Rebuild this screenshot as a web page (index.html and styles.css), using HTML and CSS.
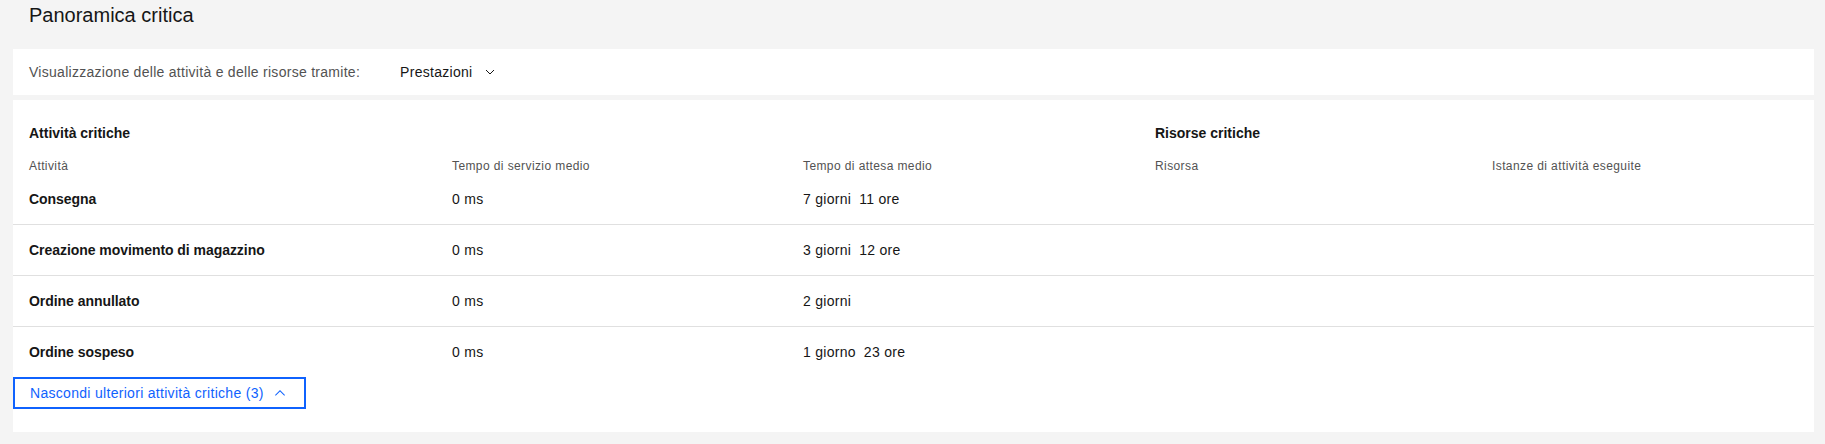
FILE: index.html
```html
<!DOCTYPE html>
<html lang="it">
<head>
<meta charset="utf-8">
<title>Panoramica critica</title>
<link rel="stylesheet" href="styles.css">
</head>
<body>
<div class="page">
  <h1 class="page-title">Panoramica critica</h1>

  <div class="card filter-card">
    <span class="filter-label">Visualizzazione delle attività e delle risorse tramite:</span>
    <button class="dropdown" type="button">
      <span>Prestazioni</span>
      <svg class="chev-down" width="16" height="16" viewBox="0 0 16 16" aria-hidden="true"><path d="M4 6l4 4 4-4" fill="none" stroke="#161616" stroke-width="1"/></svg>
    </button>
  </div>

  <div class="card table-card">
    <div class="grid sec-row">
      <div class="cell sec-title span3">Attività critiche</div>
      <div class="cell sec-title span2">Risorse critiche</div>
    </div>
    <div class="grid head-row">
      <div class="cell">Attività</div>
      <div class="cell">Tempo di servizio medio</div>
      <div class="cell">Tempo di attesa medio</div>
      <div class="cell">Risorsa</div>
      <div class="cell">Istanze di attività eseguite</div>
    </div>
    <div class="grid data-row">
      <div class="cell name">Consegna</div>
      <div class="cell">0 ms</div>
      <div class="cell"><span>7 giorni</span><span class="part">11 ore</span></div>
      <div class="cell"></div>
      <div class="cell"></div>
    </div>
    <div class="grid data-row">
      <div class="cell name">Creazione movimento di magazzino</div>
      <div class="cell">0 ms</div>
      <div class="cell"><span>3 giorni</span><span class="part">12 ore</span></div>
      <div class="cell"></div>
      <div class="cell"></div>
    </div>
    <div class="grid data-row">
      <div class="cell name">Ordine annullato</div>
      <div class="cell">0 ms</div>
      <div class="cell"><span>2 giorni</span></div>
      <div class="cell"></div>
      <div class="cell"></div>
    </div>
    <div class="grid data-row last">
      <div class="cell name">Ordine sospeso</div>
      <div class="cell">0 ms</div>
      <div class="cell"><span>1 giorno</span><span class="part">23 ore</span></div>
      <div class="cell"></div>
      <div class="cell"></div>
    </div>
    <button class="ghost-btn" type="button">
      <span>Nascondi ulteriori attività critiche (3)</span>
      <svg class="chev-up" width="16" height="16" viewBox="0 0 16 16" aria-hidden="true"><path d="M8 5l5 5-.7.7L8 6.4l-4.3 4.3L3 10z" fill="#0f62fe"/></svg>
    </button>
  </div>
</div>
</body>
</html>
```

FILE: styles.css
```css
* { box-sizing: border-box; }

html, body {
  margin: 0;
  padding: 0;
  background: #f4f4f4;
  font-family: "Liberation Sans", Arial, sans-serif;
  color: #161616;
}

.page {
  padding: 0 11px 12px 13px;
}

.page-title {
  margin: 0 0 20px 0;
  padding: 1px 16px 0 16px;
  font-size: 20px;
  line-height: 28px;
  font-weight: 400;
  color: #161616;
}

.card {
  background: #ffffff;
}

.filter-card {
  height: 46px;
  display: flex;
  align-items: center;
  padding: 0 16px;
  margin-bottom: 5px;
  font-size: 14px;
  line-height: 18px;
  letter-spacing: 0.28px;
}

.filter-label {
  color: #525252;
  margin-right: 40px;
}

.dropdown {
  display: inline-flex;
  align-items: center;
  gap: 10px;
  background: none;
  border: 0;
  padding: 0;
  font: inherit;
  letter-spacing: inherit;
  color: #161616;
}

.chev-down { display: block; }

.table-card {
  padding: 24px 0 23px 0;
}

.grid {
  display: grid;
  grid-template-columns: 423fr 351fr 352fr 337fr 338fr;
}

.cell {
  padding: 0 16px;
  min-width: 0;
}

.span3 { grid-column: span 3; }
.span2 { grid-column: span 2; }

.sec-row {
  font-size: 14px;
  line-height: 18px;
  font-weight: 700;
  margin-bottom: 16px;
}

.head-row {
  font-size: 12px;
  line-height: 16px;
  letter-spacing: 0.4px;
  color: #525252;
}

.data-row {
  height: 51px;
  border-bottom: 1px solid #e0e0e0;
  font-size: 14px;
  line-height: 18px;
  letter-spacing: 0.28px;
  align-items: center;
}

.data-row.last {
  height: 50px;
  border-bottom: 0;
}

.data-row .cell {
  display: flex;
  align-items: center;
}

.name {
  font-weight: 700;
  letter-spacing: -0.05px;
}

.part {
  margin-left: 8px;
}

.ghost-btn {
  display: inline-flex;
  align-items: center;
  height: 32px;
  border: 2px solid #0f62fe;
  background: #ffffff;
  padding: 0 16px 0 15px;
  font-family: inherit;
  font-size: 14px;
  line-height: 18px;
  letter-spacing: 0.3px;
  color: #0f62fe;
  cursor: pointer;
}

.chev-up {
  display: block;
  margin-left: 8px;
}
```
